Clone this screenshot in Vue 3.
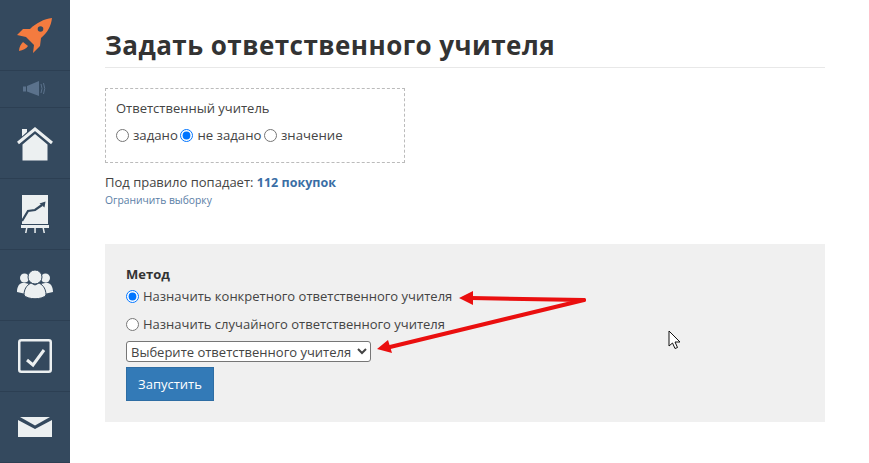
<script setup>
const rows = [
  { id: 'rocket', cls: 'tall' },
  { id: 'speaker', cls: 'short' },
  { id: 'home', cls: 'tall' },
  { id: 'chart', cls: 'tall' },
  { id: 'users', cls: 'tall' },
  { id: 'check', cls: 'tall' },
  { id: 'mail', cls: 'tall' }
]
</script>

<template>
  <div class="page">
    <aside class="side">
      <div v-for="r in rows" :key="r.id" class="item" :class="r.cls">
        <svg v-if="r.id === 'rocket'" width="38" height="38" viewBox="17 15 38 38">
          <path fill="#f47b3f" d="M53 17 C45 18 37 22 31 28 L24 28 L18 34 L27 36 L35 44 L34 52 L41 45 L42 37 C49 31 52 25 53 17Z"/>
          <circle cx="41.500" cy="28" r="2.800" fill="#34495e"/>
          <path fill="#f47b3f" d="M24 41 L29 45 C27 48 24 49 20 50 C20 46 22 43 24 41Z"/>
        </svg>
        <svg v-else-if="r.id === 'speaker'" width="24" height="16" viewBox="0 0 24 16">
          <path fill="#5b728c" d="M0 5.500 H3 V10.500 H0Z M4 5 L16 0 V15 L4 10.500Z"/>
          <path fill="none" stroke="#5b728c" d="M18 3 Q20 7.500 18 12 M20.500 2 Q23 7.500 20.500 13"/>
        </svg>
        <svg v-else-if="r.id === 'home'" class="home" width="36" height="34" viewBox="0 0 36 34">
          <path fill="#ecf0f1" d="M5 2 H10 V5 L5 9.500Z M5.500 17.500 L18 7 L30.500 17.500 V33.500 H5.500Z"/>
          <path fill="none" stroke="#ecf0f1" stroke-width="3" d="M1 16 L18 2 L35 16"/>
        </svg>
        <svg v-else-if="r.id === 'chart'" width="28" height="38" viewBox="0 0 28 38">
          <path fill="#ecf0f1" d="M1 0 H27 V29 H1Z M0 30 H28 V33 H0Z M5 33 H6.500 L5.500 38 H4Z M13.300 33 H14.800 V38 H13.300Z M21.500 33 H23 L24 38 H22.500Z"/>
          <path fill="none" stroke="#34495e" stroke-width="2.200" d="M1 26 L7 16 L14 15 L21 10"/>
          <path fill="#34495e" d="M18.500 8.500 L24.500 6.500 L23.500 12.500Z"/>
        </svg>
        <svg v-else-if="r.id === 'users'" width="36" height="30" viewBox="0 0 36 30">
          <circle cx="7.500" cy="8" r="4.500" fill="#ecf0f1"/>
          <circle cx="28.500" cy="8" r="4.500" fill="#ecf0f1"/>
          <path fill="#ecf0f1" d="M0 22 C0 16 3 12 8 13 L12 14 L9 24 Z M36 22 C36 16 33 12 28 13 L24 14 L27 24Z"/>
          <circle cx="18" cy="7" r="7" fill="#ecf0f1" stroke="#34495e"/>
          <path fill="#ecf0f1" stroke="#34495e" d="M7 25 C7 17 12 14 14 13 L18 15 L22 13 C24 14 29 17 29 25 C26 30 10 30 7 25Z"/>
        </svg>
        <svg v-else-if="r.id === 'check'" width="34" height="34" viewBox="0 0 34 34">
          <rect x="1.250" y="1.250" width="31.500" height="31.500" rx="2" fill="none" stroke="#ecf0f1" stroke-width="2.500"/>
          <path fill="none" stroke="#ecf0f1" stroke-width="3" d="M9 21 L15 26 L26 11"/>
        </svg>
        <svg v-else width="34" height="20" viewBox="0 0 34 20">
          <path fill="#ecf0f1" d="M0 3 L17 12 L34 3 V20 H0Z"/>
          <path fill="#ecf0f1" d="M2 0 H32 L17 8.500Z"/>
        </svg>
      </div>
    </aside>

    <main class="main">
      <h1 class="title">Задать ответственного учителя</h1>

      <fieldset class="filter">
        <div class="filter-label">Ответственный учитель</div>
        <div class="filter-opts">
          <label><input type="radio" name="f" />задано</label>
          <label><input type="radio" name="f" checked />не задано</label>
          <label><input type="radio" name="f" />значение</label>
        </div>
      </fieldset>

      <p class="count">Под правило попадает: <b>112 покупок</b></p>
      <a class="limit">Ограничить выборку</a>

      <section class="method">
        <div class="method-title">Метод</div>
        <label class="opt first"><input type="radio" name="m" checked />Назначить конкретного ответственного учителя</label>
        <label class="opt second"><input type="radio" name="m" />Назначить случайного ответственного учителя</label>
        <select class="sel"><option>Выберите ответственного учителя</option></select>
        <button class="run">Запустить</button>

        <svg class="arrows" width="490" height="90" viewBox="0 0 490 90">
          <g fill="none" stroke="#ea0f0f" stroke-width="4" stroke-linecap="round">
            <path d="M479 22 L366 20"/>
            <path d="M479 22 L285 69"/>
          </g>
          <path fill="#ea0f0f" d="M354 20 L368 13 L368 27Z M272 71 L283 62 L287 75Z"/>
        </svg>
        <svg class="cursor" width="14" height="20" viewBox="0 0 14 20">
          <path fill="#fff" stroke="#111" d="M1 1 V16 L4.500 13 L7 18.500 L9.500 17.500 L7 12 H12Z"/>
        </svg>
      </section>
    </main>
  </div>
</template>

<style>
html, body { margin: 0; background: #fff; }
</style>

<style scoped>
.page {
  display: flex;
  width: 869px;
  height: 463px;
  overflow: hidden;
  font-family: "Open Sans", "Noto Sans", sans-serif;
  color: #444;
}
.side {
  width: 70px;
  flex: none;
  background: #34495e;
  display: flex;
  flex-direction: column;
}
.item {
  display: flex;
  align-items: center;
  justify-content: center;
  border-bottom: 1px solid #2c3f53;
  box-sizing: border-box;
}
.item.tall { height: 71px; }
.item.short { height: 37px; }
.home { margin-top: 2px; }
.main {
  flex: none;
  width: 720px;
  margin-left: 35px;
}
.title {
  margin: 27px 0 0;
  height: 40px;
  border-bottom: 1px solid #e8e8e8;
  font-size: 26px;
  line-height: 36px;
  font-weight: 700;
  letter-spacing: 0.45px;
  color: #333;
}
.filter {
  margin: 20px 0 0;
  padding: 10px 10px 0;
  box-sizing: border-box;
  width: 300px;
  height: 75px;
  border: 1px dashed #bbb;
}
.filter-label { font-size: 13px; line-height: 18px; }
.filter-opts { display: flex; gap: 2.500px; margin-top: 9px; font-size: 13.200px; line-height: 18px; }
.filter-opts label { display: flex; align-items: center; }
input[type="radio"] { margin: 0 4px 0 0; width: 13px; height: 13px; }
.count { margin: 11px 0 0; font-size: 13px; line-height: 16px; }
.count b { color: #3a6ea5; font-size: 12.500px; }
.limit { display: block; margin-top: 2px; font-size: 10.300px; line-height: 14px; color: #5a7ea6; }
.method {
  position: relative;
  margin-top: 37px;
  height: 178px;
  box-sizing: border-box;
  padding: 21px 21px 0;
  background: #f0f0f0;
}
.method-title { font-size: 13px; font-weight: 700; line-height: 18px; color: #333; }
.opt { display: flex; align-items: center; font-size: 13px; line-height: 18px; }
.opt.first { margin-top: 4px; }
.opt.second { margin-top: 10px; }
.sel {
  display: block;
  margin-top: 8px;
  width: 245px;
  height: 21px;
  font-family: "Open Sans", "Noto Sans", sans-serif;
  font-size: 13px;
  color: #444;
  background: #fff;
  border: 1px solid #767676;
  border-radius: 3px;
}
.run {
  display: block;
  margin-top: 5px;
  width: 88px;
  height: 34px;
  border: 1px solid #2e6da4;
  background: #337ab7;
  color: #fff;
  font-family: inherit;
  font-size: 13px;
}
.arrows { position: absolute; left: 0; top: 34px; pointer-events: none; }
.cursor { position: absolute; left: 563px; top: 86px; }
</style>
